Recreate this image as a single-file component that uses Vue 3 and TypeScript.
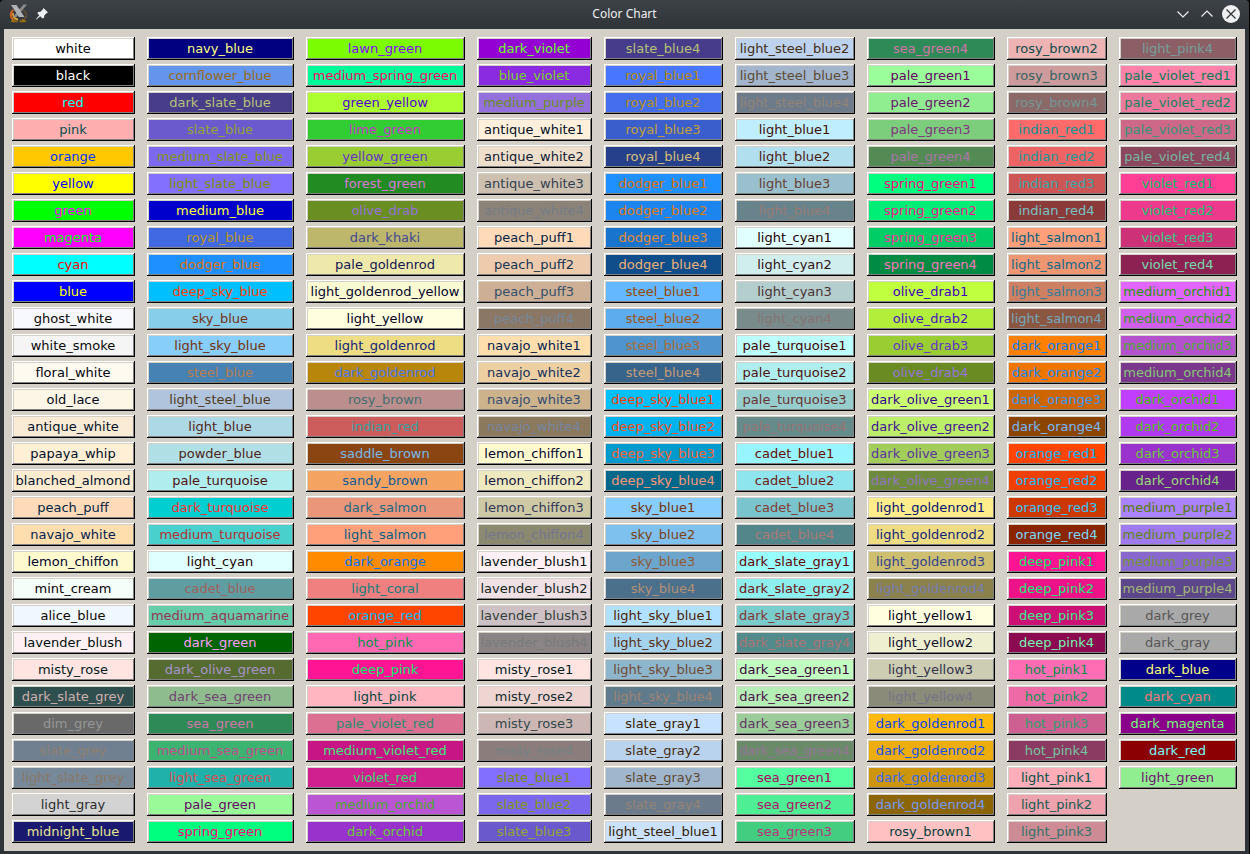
<script setup lang="ts">
interface Swatch {
  name: string
  background: string
  color: string
}

const palette: string[] = [
  `white FFFFFF|black 000000|red FF0000|pink FFAFAF|orange FFC800|yellow FFFF00|green 00FF00|magenta FF00FF|cyan 00FFFF|blue 0000FF|ghost_white F8F8FF|white_smoke F5F5F5|floral_white FFFAF0|old_lace FDF5E6|antique_white FAEBD7|papaya_whip FFEFD5|blanched_almond FFEBCD|peach_puff FFDAB9|navajo_white FFDEAD|lemon_chiffon FFFACD|mint_cream F5FFFA|alice_blue F0F8FF|lavender_blush FFF0F5|misty_rose FFE4E1|dark_slate_grey 2F4F4F|dim_grey 696969|slate_grey 708090|light_slate_grey 778899|light_gray D3D3D3|midnight_blue 191970`,
  `navy_blue 000080|cornflower_blue 6495ED|dark_slate_blue 483D8B|slate_blue 6A5ACD|medium_slate_blue 7B68EE|light_slate_blue 8470FF|medium_blue 0000CD|royal_blue 4169E1|dodger_blue 1E90FF|deep_sky_blue 00BFFF|sky_blue 87CEEB|light_sky_blue 87CEFA|steel_blue 4682B4|light_steel_blue B0C4DE|light_blue ADD8E6|powder_blue B0E0E6|pale_turquoise AFEEEE|dark_turquoise 00CED1|medium_turquoise 48D1CC|light_cyan E0FFFF|cadet_blue 5F9EA0|medium_aquamarine 66CDAA|dark_green 006400|dark_olive_green 556B2F|dark_sea_green 8FBC8F|sea_green 2E8B57|medium_sea_green 3CB371|light_sea_green 20B2AA|pale_green 98FB98|spring_green 00FF7F`,
  `lawn_green 7CFC00|medium_spring_green 00FA9A|green_yellow ADFF2F|lime_green 32CD32|yellow_green 9ACD32|forest_green 228B22|olive_drab 6B8E23|dark_khaki BDB76B|pale_goldenrod EEE8AA|light_goldenrod_yellow FAFAD2|light_yellow FFFFE0|light_goldenrod EEDD82|dark_goldenrod B8860B|rosy_brown BC8F8F|indian_red CD5C5C|saddle_brown 8B4513|sandy_brown F4A460|dark_salmon E9967A|light_salmon FFA07A|dark_orange FF8C00|light_coral F08080|orange_red FF4500|hot_pink FF69B4|deep_pink FF1493|light_pink FFB6C1|pale_violet_red DB7093|medium_violet_red C71585|violet_red D02090|medium_orchid BA55D3|dark_orchid 9932CC`,
  `dark_violet 9400D3|blue_violet 8A2BE2|medium_purple 9370DB|antique_white1 FFEFDB|antique_white2 EEDFCC|antique_white3 CDC0B0|antique_white4 8B8378|peach_puff1 FFDAB9|peach_puff2 EECBAD|peach_puff3 CDAF95|peach_puff4 8B7765|navajo_white1 FFDEAD|navajo_white2 EECFA1|navajo_white3 CDB38B|navajo_white4 8B795E|lemon_chiffon1 FFFACD|lemon_chiffon2 EEE9BF|lemon_chiffon3 CDC9A5|lemon_chiffon4 8B8970|lavender_blush1 FFF0F5|lavender_blush2 EEE0E5|lavender_blush3 CDC1C5|lavender_blush4 8B8386|misty_rose1 FFE4E1|misty_rose2 EED5D2|misty_rose3 CDB7B5|misty_rose4 8B7D7B|slate_blue1 836FFF|slate_blue2 7A67EE|slate_blue3 6959CD`,
  `slate_blue4 473C8B|royal_blue1 4876FF|royal_blue2 436EEE|royal_blue3 3A5FCD|royal_blue4 27408B|dodger_blue1 1E90FF|dodger_blue2 1C86EE|dodger_blue3 1874CD|dodger_blue4 104E8B|steel_blue1 63B8FF|steel_blue2 5CACEE|steel_blue3 4F94CD|steel_blue4 36648B|deep_sky_blue1 00BFFF|deep_sky_blue2 00B2EE|deep_sky_blue3 009ACD|deep_sky_blue4 00688B|sky_blue1 87CEFF|sky_blue2 7EC0EE|sky_blue3 6CA6CD|sky_blue4 4A708B|light_sky_blue1 B0E2FF|light_sky_blue2 A4D3EE|light_sky_blue3 8DB6CD|light_sky_blue4 607B8B|slate_gray1 C6E2FF|slate_gray2 B9D3EE|slate_gray3 9FB6CD|slate_gray4 6C7B8B|light_steel_blue1 CAE1FF`,
  `light_steel_blue2 BCD2EE|light_steel_blue3 A2B5CD|light_steel_blue4 6E7B8B|light_blue1 BFEFFF|light_blue2 B2DFEE|light_blue3 9AC0CD|light_blue4 68838B|light_cyan1 E0FFFF|light_cyan2 D1EEEE|light_cyan3 B4CDCD|light_cyan4 7A8B8B|pale_turquoise1 BBFFFF|pale_turquoise2 AEEEEE|pale_turquoise3 96CDCD|pale_turquoise4 668B8B|cadet_blue1 98F5FF|cadet_blue2 8EE5EE|cadet_blue3 7AC5CD|cadet_blue4 53868B|dark_slate_gray1 97FFFF|dark_slate_gray2 8DEEEE|dark_slate_gray3 79CDCD|dark_slate_gray4 528B8B|dark_sea_green1 C1FFC1|dark_sea_green2 B4EEB4|dark_sea_green3 9BCD9B|dark_sea_green4 698B69|sea_green1 54FF9F|sea_green2 4EEE94|sea_green3 43CD80`,
  `sea_green4 2E8B57|pale_green1 9AFF9A|pale_green2 90EE90|pale_green3 7CCD7C|pale_green4 548B54|spring_green1 00FF7F|spring_green2 00EE76|spring_green3 00CD66|spring_green4 008B45|olive_drab1 C0FF3E|olive_drab2 B3EE3A|olive_drab3 9ACD32|olive_drab4 698B22|dark_olive_green1 CAFF70|dark_olive_green2 BCEE68|dark_olive_green3 A2CD5A|dark_olive_green4 6E8B3D|light_goldenrod1 FFEC8B|light_goldenrod2 EEDC82|light_goldenrod3 CDBE70|light_goldenrod4 8B814C|light_yellow1 FFFFE0|light_yellow2 EEEED1|light_yellow3 CDCDB4|light_yellow4 8B8B7A|dark_goldenrod1 FFB90F|dark_goldenrod2 EEAD0E|dark_goldenrod3 CD950C|dark_goldenrod4 8B6508|rosy_brown1 FFC1C1`,
  `rosy_brown2 EEB4B4|rosy_brown3 CD9B9B|rosy_brown4 8B6969|indian_red1 FF6A6A|indian_red2 EE6363|indian_red3 CD5555|indian_red4 8B3A3A|light_salmon1 FFA07A|light_salmon2 EE9572|light_salmon3 CD8162|light_salmon4 8B5742|dark_orange1 FF7F00|dark_orange2 EE7600|dark_orange3 CD6600|dark_orange4 8B4500|orange_red1 FF4500|orange_red2 EE4000|orange_red3 CD3700|orange_red4 8B2500|deep_pink1 FF1493|deep_pink2 EE1289|deep_pink3 CD1076|deep_pink4 8B0A50|hot_pink1 FF6EB4|hot_pink2 EE6AA7|hot_pink3 CD6090|hot_pink4 8B3A62|light_pink1 FFAEB9|light_pink2 EEA2AD|light_pink3 CD8C95`,
  `light_pink4 8B5F65|pale_violet_red1 FF82AB|pale_violet_red2 EE799F|pale_violet_red3 CD6889|pale_violet_red4 8B475D|violet_red1 FF3E96|violet_red2 EE3A8C|violet_red3 CD3278|violet_red4 8B2252|medium_orchid1 E066FF|medium_orchid2 D15FEE|medium_orchid3 B452CD|medium_orchid4 7A378B|dark_orchid1 BF3EFF|dark_orchid2 B23AEE|dark_orchid3 9A32CD|dark_orchid4 68228B|medium_purple1 AB82FF|medium_purple2 9F79EE|medium_purple3 8968CD|medium_purple4 5D478B|dark_grey A9A9A9|dark_gray A9A9A9|dark_blue 00008B|dark_cyan 008B8B|dark_magenta 8B008B|dark_red 8B0000|light_green 90EE90`,
]

// Each label is written in the complement of its background.
function complement(hex: string): string {
  return (0xffffff - parseInt(hex, 16)).toString(16).padStart(6, '0')
}

const columns: Swatch[][] = palette.map((column) =>
  column.split('|').map((entry) => {
    const [name, hex] = entry.split(' ')
    return { name, background: `#${hex}`, color: `#${complement(hex)}` }
  }),
)
</script>

<template>
  <div class="window">
    <header class="titlebar">
      <div class="side">
        <button class="tool" type="button" aria-label="Window menu">
          <svg width="20" height="20" viewBox="0 0 20 20">
            <ellipse cx="9.500" cy="11" rx="8" ry="6" fill="none" stroke="#6a5034" stroke-width="1.500" />
            <path d="M4 6C1 9 1 13 4.500 16" fill="none" stroke="#d8641c" stroke-width="2" />
            <path d="M4 9C3.500 12 5.500 15 9 15.500" fill="none" stroke="#f4b03c" stroke-width="1.500" />
            <path d="M2 17.500L6 15.500M13 15.500L17 17.500M3 17.500H8M11 17.500H16" stroke="#94700c" stroke-width="1.500" />
            <path d="M14.500 0.500H18L7.500 13H4Z" fill="#8b8e91" />
            <path d="M2 1H7.500L15.500 13H10Z" fill="#b0b3b6" />
          </svg>
        </button>
        <button class="tool" type="button" aria-label="Keep on all desktops">
          <svg width="14" height="14" viewBox="0 0 14 14">
            <path d="M8.500 1L13 5.500L11.500 6.300L9.300 8.500L9 11L7.300 11.300L5.200 9.200L1.500 12.500L1 12L4.300 8.300L2.500 6.500L3 5L5.500 4.700L7.700 2.500Z" fill="#eff0f1" />
          </svg>
        </button>
      </div>
      <h1 class="title">Color Chart</h1>
      <div class="side end">
        <button class="tool" type="button" aria-label="Minimize">
          <svg width="18" height="18" viewBox="0 0 18 18">
            <path d="M3.500 6.500L9 12L14.500 6.500" fill="none" stroke="#eff0f1" stroke-width="1.200" />
          </svg>
        </button>
        <button class="tool" type="button" aria-label="Maximize">
          <svg width="18" height="18" viewBox="0 0 18 18">
            <path d="M3.500 11.500L9 6L14.500 11.500" fill="none" stroke="#eff0f1" stroke-width="1.200" />
          </svg>
        </button>
        <button class="tool" type="button" aria-label="Close">
          <svg width="18" height="18" viewBox="0 0 18 18">
            <circle cx="9" cy="9" r="9" fill="#eff0f1" />
            <path d="M4.500 4.500L13.500 13.500M13.500 4.500L4.500 13.500" stroke="#31363b" stroke-width="1.300" />
          </svg>
        </button>
      </div>
    </header>
    <main class="chart">
      <div v-for="(column, index) in columns" :key="index" class="column">
        <button
          v-for="swatch in column"
          :key="swatch.name"
          class="swatch"
          type="button"
          :style="{ background: swatch.background, color: swatch.color }"
        >
          {{ swatch.name }}
        </button>
      </div>
    </main>
  </div>
</template>

<style>
body {
  margin: 0;
  background: #000;
}
</style>

<style scoped>
.window {
  margin-right: 1px;
  padding: 0 4px 3px;
  border-radius: 4px 4px 0 0;
  background: linear-gradient(#3d4248 0, #2f3438 29px, #2f3438 100%);
}

.titlebar {
  box-sizing: border-box;
  display: flex;
  align-items: center;
  justify-content: space-between;
  height: 29px;
  padding-bottom: 1px;
}

.side {
  display: flex;
  flex: 1;
  align-items: center;
  gap: 6px;
  padding: 0 5px;
}

.end {
  justify-content: flex-end;
}

.tool {
  display: block;
  padding: 0;
  border: 0;
  background: none;
}

.tool svg {
  display: block;
}

.title {
  margin: 0;
  color: #eff0f1;
  font: 12px/18px "Noto Sans", sans-serif;
}

.chart {
  display: grid;
  grid-template-columns: 123fr 147fr 159fr 115fr 119fr 120fr 128fr 100fr 118fr;
  gap: 12px;
  padding: 8px;
  background: #d4d0c8;
}

.column {
  display: flex;
  flex-direction: column;
  gap: 4px;
  min-width: 0;
}

.swatch {
  height: 23px;
  padding: 0 1px 0 0;
  border: 0;
  box-shadow:
    inset -1px -1px #000,
    inset 1px 1px #fff,
    inset -2px -2px #808080,
    inset 2px 2px #d4d0c8;
  font: 13px/23px "DejaVu Sans", sans-serif;
  text-align: center;
  white-space: nowrap;
}
</style>
